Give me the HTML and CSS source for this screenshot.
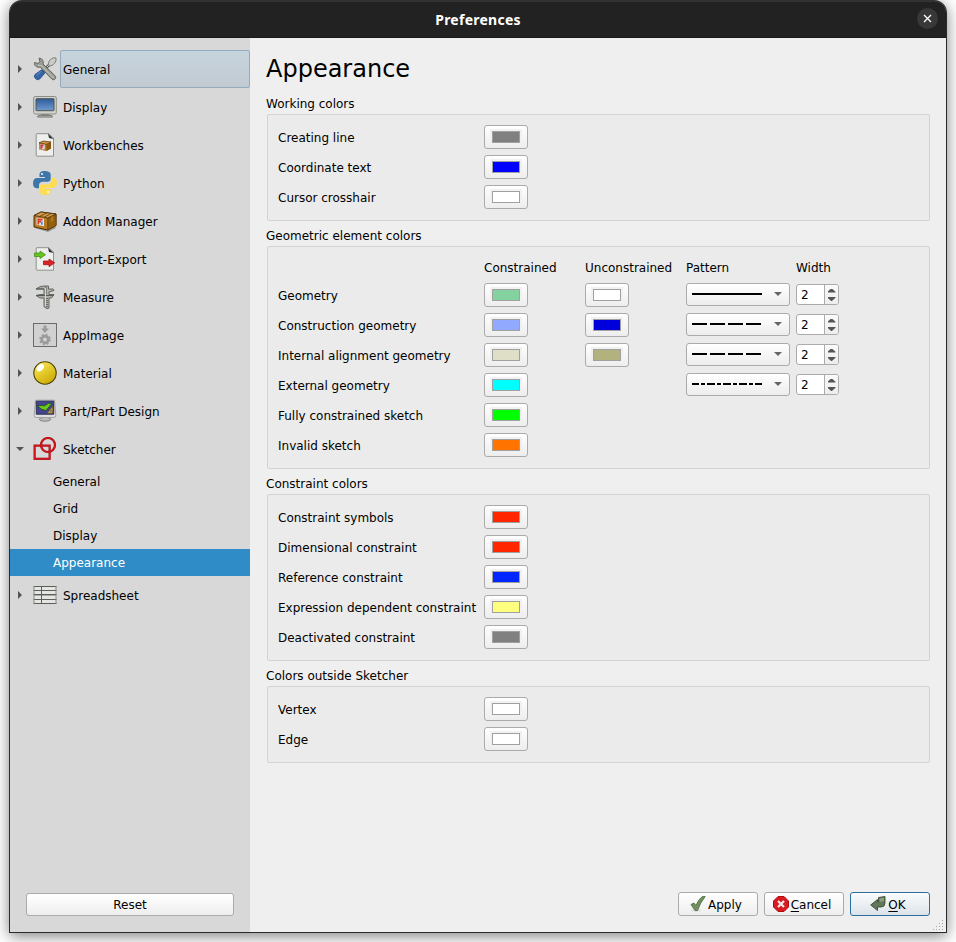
FILE: index.html
```html
<!DOCTYPE html>
<html lang="en">
<head>
<meta charset="utf-8">
<title>Preferences</title>
<link rel="stylesheet" href="styles.css">
</head>
<body>
<div class="window">
  <header class="titlebar">
    <span class="titlebar-text">Preferences</span>
    <button class="close" aria-label="Close"><svg width="21" height="21" viewBox="0 0 21 21"><path d="M7 7l7 7M14 7L7 14" stroke="#fff" stroke-width="1.300"/></svg></button>
  </header>
  <div class="body">
    <aside class="sidebar">
      <nav class="tree">
        <div class="item"><i class="arrow"></i>
          <svg class="icon" viewBox="0 0 24 24"><path d="M17.500 6.500l-8 8" stroke="#555753" stroke-width="2.500"/><path d="M17.500 6.500l-8 8" stroke="#d3d7cf" stroke-width="1"/><path d="M15.500 8c-.5-4 3-8 7.500-7 .7 4-2.500 7.500-6.300 8z" fill="#c9cdc6" stroke="#777b75"/><path d="M1.500 5.500l3.300 1L7 4.700l-1-3.500C9 1 11 4 10 7l12.300 12c1.500 2.200-1.100 4.800-3.300 3.300L7.300 10C4 11 .8 8.500 1.500 5.500z" fill="#9b9e96" stroke="#60645e"/><path d="M5 8.200q3 0 4 1.200L20.500 21" fill="none" stroke="#c9cbc4" stroke-width="1"/><path d="M8.700 12.800l3.200 3.200-5.200 6c-2.400 2.300-7-1.800-4.700-4.500z" fill="#3465a4" stroke="#204a87" stroke-width=".8"/><path d="M3.500 18.700l5-4.700" stroke="#729fcf" stroke-width=".8"/></svg>
          <span class="name focused">General</span></div>
        <div class="item"><i class="arrow"></i>
          <svg class="icon" viewBox="0 0 24 24"><defs><linearGradient id="screen" x2="0" y2="1"><stop stop-color="#2e5c99"/><stop offset="1" stop-color="#6f9bd0"/></linearGradient></defs><path d="M8 19h8v2H8z" fill="#888a85"/><path d="M5.500 20.300h13l1 1.700h-15z" fill="#c8cac5" stroke="#70726e"/><rect x=".7" y="1.500" width="22.600" height="17.500" rx="1.500" fill="#d0d4cc" stroke="#8b8e88"/><rect x="3" y="3.700" width="18" height="12" rx=".5" fill="url(#screen)" stroke="#50534e"/></svg>
          <span class="name">Display</span></div>
        <div class="item"><i class="arrow"></i>
          <svg class="icon" viewBox="0 0 24 24"><path d="M4 .7h12l4.500 4.500v18H4q-.8 0-.8-.8V1.500q0-.8.800-.8z" fill="#eeeeec" stroke="#8f918c"/><path d="M15 .5l6 6-1.500-.8-3.500-.7z" fill="#2b2b2b"/><path d="M6 9.800l4.500-1.800 7.500 1v6.500l-4.500 2.500L6 16.600z" fill="#b67725"/><path d="M13.500 11.500l4.500-2.500v6.500l-4.500 2.500z" fill="#8a570c"/><path d="M6 9.800l4.500-1.800 7.500 1-4.500 2.300z" fill="#cf9044" stroke="#533508" stroke-width=".6"/><path d="M6.800 11.500h5v4.800h-5z" fill="#cfd9e8"/><path d="M8 16v-3.700h2.500M8 14.200h2" stroke="#ce3020" stroke-width="1.300" fill="none"/></svg>
          <span class="name">Workbenches</span></div>
        <div class="item"><i class="arrow"></i>
          <svg class="icon" viewBox="0 0 24 24"><path d="M12 0C8 0 6.500 1.500 6.500 3.500V6H12v1H4C1.500 7 0 9 0 12.200 0 15.500 1.500 17.200 3.700 17.200H6v-3c0-2 1.700-3.400 3.700-3.400h5c1.700 0 3-1.300 3-3V3.500C17.700 1.200 15.500 0 12 0z" fill="#3d76a8"/><circle cx="9" cy="3" r="1.100" fill="#e8f0f6"/><path d="M12 24c4 0 5.700-1.500 5.700-3.500V18H12v-1h8c2.500 0 4-2 4-5.200 0-3.300-1.500-5-3.700-5H18.200V10c0 2-1.700 3.300-3.700 3.300h-5c-1.700 0-3 1.200-3 3v4.200C6.500 22.800 8.500 24 12 24z" fill="#ffdc55"/><circle cx="15" cy="21" r="1.100" fill="#fffbe8"/></svg>
          <span class="name">Python</span></div>
        <div class="item"><i class="arrow"></i>
          <svg class="icon" viewBox="0 0 24 24"><path d="M2 19l13 4 8-4-1-1.500z" fill="#9a9a9a"/><path d="M1 6.500L8 3l15 2v11.500L14.800 21 1 18z" fill="#b87a20" stroke="#4e3006"/><path d="M14.800 9L23 5v11.500L14.800 21z" fill="#94600e" stroke="#5c3b08" stroke-width=".8"/><path d="M1 6.500L8 3l15 2-8.200 4z" fill="#d29a4c" stroke="#4a2e06" stroke-width=".8"/><path d="M6.500 7.500L14 3.800M11 8.300l7.500-3.900" stroke="#5f3e0c" stroke-width=".8"/><path d="M18 8v5l2-1V7z" fill="#b07a24"/><path d="M3.500 8.500l7.500 1.300v7.400L3.500 15.800z" fill="#dde7f5"/><path d="M5.300 15.500V10.200l4.200.7M5.300 12.700h2.700" fill="none" stroke="#dc3a26" stroke-width="1.700"/><path d="M8.800 12.500v3.200" stroke="#4a86cc" stroke-width="1.700"/></svg>
          <span class="name">Addon Manager</span></div>
        <div class="item"><i class="arrow"></i>
          <svg class="icon" viewBox="0 0 24 24"><path d="M4 .7h12l4.500 4.500v18H4q-.8 0-.8-.8V1.500q0-.8.800-.8z" fill="#eeeeec" stroke="#8f918c"/><path d="M15 .5l6 6-1.500-.8-3.500-.7z" fill="#2b2b2b"/><path d="M1.500 6h5.500V4l5.500 3.700L7 11.500v-2H1.500z" fill="#66c41f" stroke="#478f14" stroke-width=".8"/><path d="M10.500 14h5.500v-2l5.700 3.800-5.700 3.900v-2h-5.500z" fill="#dc2525" stroke="#a01616" stroke-width=".8"/></svg>
          <span class="name">Import-Export</span></div>
        <div class="item"><i class="arrow"></i>
          <svg class="icon" viewBox="0 0 24 24"><path d="M3 4Q7 .8 11 1h4.500v3H20l1 1.500-5 1.500v2.500h5L18.500 13H16v10l-2 .7-3-2V13H7l-4-2.500 4-1h4V4z" fill="#adb1a9" stroke="#5a5d57" stroke-width=".9"/><path d="M3 4h8M13 1.500v8M3.500 10.500h17" fill="none" stroke="#4f524c" stroke-width=".9"/><path d="M12.500 3v18" stroke="#d4d7d0" stroke-width="1"/><path d="M14 13v9" stroke="#555" stroke-width="1.500" stroke-dasharray="1 1"/></svg>
          <span class="name">Measure</span></div>
        <div class="item"><i class="arrow"></i>
          <svg class="icon" viewBox="0 0 24 24"><rect x=".5" y=".5" width="23" height="23" fill="#d1d1d1" stroke="#6c6c6c"/><path d="M10.500 2.500h3v3H16l-4 4.500-4-4.500h2.500z" fill="#9b9b9b"/><circle cx="12" cy="16.500" r="3.300" fill="none" stroke="#9b9b9b" stroke-width="2.700"/><circle cx="12" cy="16.500" r="4.900" fill="none" stroke="#9b9b9b" stroke-width="1.800" stroke-dasharray="2 1.850"/></svg>
          <span class="name">AppImage</span></div>
        <div class="item"><i class="arrow"></i>
          <svg class="icon" viewBox="0 0 24 24"><defs><linearGradient id="gold" x1=".2" y1=".1" x2=".8" y2="1"><stop stop-color="#f7e44d"/><stop offset="1" stop-color="#c9a600"/></linearGradient></defs><circle cx="12" cy="12" r="11.200" fill="url(#gold)" stroke="#4b4205" stroke-width="1.100"/><ellipse cx="7.300" cy="6.700" rx="4.200" ry="3" transform="rotate(-45 7.300 6.700)" fill="#fff"/></svg>
          <span class="name">Material</span></div>
        <div class="item"><i class="arrow"></i>
          <svg class="icon" viewBox="0 0 24 24"><ellipse cx="12" cy="20.300" rx="5.700" ry="1.900" fill="#bbb" stroke="#858585"/><path d="M2.500 1.200h19l1.300 15.300q0 2-2 2H3.200q-2 0-2-2z" fill="#dedede" stroke="#a3a3a3"/><path d="M3.300 2.200h17.400v13H3.300z" fill="#44458c" stroke="#2d2d5c"/><path d="M4.500 7l4.500-.7 2 .7 5-3 2.500 1-5.500 6.500-4-1z" fill="#68ca21" stroke="#1d3f0a" stroke-width=".7"/><path d="M14 14.200l5.800-7v7z" fill="#cdb14f" stroke="#5c4708" stroke-width=".7"/><path d="M16.500 12.800l2-2.300v2.300z" fill="#44458c"/></svg>
          <span class="name">Part/Part Design</span></div>
        <div class="item"><i class="arrow open"></i>
          <svg class="icon" viewBox="0 0 24 24"><g fill="none" stroke="#a80f14" stroke-width="2.200"><rect x="1.600" y="8.600" width="15" height="13.200"/><circle cx="15" cy="8" r="7"/></g><g fill="none" stroke="#d4171c" stroke-width="1.200"><rect x="1.600" y="8.600" width="15" height="13.200"/><circle cx="15" cy="8" r="7"/></g></svg>
          <span class="name">Sketcher</span></div>
        <div class="child">General</div>
        <div class="child">Grid</div>
        <div class="child">Display</div>
        <div class="child selected">Appearance</div>
        <div class="item"><i class="arrow"></i>
          <svg class="icon" viewBox="0 0 24 24"><rect x="1" y="3" width="22" height="18" fill="#e4e6e1"/><path d="M1 12h22" stroke="#aaa" stroke-width="2"/><path d="M.5 3.500h23M.5 7.500h23M.5 11.500h23M.5 16.500h23M.5 20.500h23M8.500 3v18" stroke="#5c5e5b"/><path d="M1 3v18M23 3v18" stroke="#888"/></svg>
          <span class="name">Spreadsheet</span></div>
      </nav>
      <button class="button reset">Reset</button>
    </aside>
    <main class="page">
      <h1>Appearance</h1>
      <h2>Working colors</h2>
      <section class="group">
        <div class="row"><span>Creating line</span><button class="color"><i class="gray"></i></button></div>
        <div class="row"><span>Coordinate text</span><button class="color"><i class="blue"></i></button></div>
        <div class="row"><span>Cursor crosshair</span><button class="color"><i class="white"></i></button></div>
      </section>
      <h2>Geometric element colors</h2>
      <section class="group">
        <div class="row head"><span></span><span>Constrained</span><span>Unconstrained</span><span>Pattern</span><span>Width</span></div>
        <div class="row"><span>Geometry</span><button class="color"><i class="green"></i></button><button class="color"><i class="white"></i></button>
          <div class="combo"><svg width="72" height="2"><path d="M0 1h70"/></svg></div><div class="spin"><span>2</span><b></b></div></div>
        <div class="row"><span>Construction geometry</span><button class="color"><i class="periwinkle"></i></button><button class="color"><i class="navy"></i></button>
          <div class="combo"><svg width="72" height="2"><path class="dash" d="M0 1h69"/></svg></div><div class="spin"><span>2</span><b></b></div></div>
        <div class="row"><span>Internal alignment geometry</span><button class="color"><i class="cream"></i></button><button class="color"><i class="olive"></i></button>
          <div class="combo"><svg width="72" height="2"><path class="dash" d="M0 1h69"/></svg></div><div class="spin"><span>2</span><b></b></div></div>
        <div class="row"><span>External geometry</span><button class="color"><i class="cyan"></i></button><span></span>
          <div class="combo"><svg width="72" height="2"><path class="dashdot" d="M0 1h70"/></svg></div><div class="spin"><span>2</span><b></b></div></div>
        <div class="row"><span>Fully constrained sketch</span><button class="color"><i class="lime"></i></button></div>
        <div class="row"><span>Invalid sketch</span><button class="color"><i class="orange"></i></button></div>
      </section>
      <h2>Constraint colors</h2>
      <section class="group">
        <div class="row"><span>Constraint symbols</span><button class="color"><i class="red"></i></button></div>
        <div class="row"><span>Dimensional constraint</span><button class="color"><i class="red"></i></button></div>
        <div class="row"><span>Reference constraint</span><button class="color"><i class="royal"></i></button></div>
        <div class="row"><span>Expression dependent constraint</span><button class="color"><i class="yellow"></i></button></div>
        <div class="row"><span>Deactivated constraint</span><button class="color"><i class="gray"></i></button></div>
      </section>
      <h2>Colors outside Sketcher</h2>
      <section class="group">
        <div class="row"><span>Vertex</span><button class="color"><i class="white"></i></button></div>
        <div class="row"><span>Edge</span><button class="color"><i class="white"></i></button></div>
      </section>
      <footer class="actions">
        <button class="button"><svg width="16" height="16" viewBox="0 0 16 16"><ellipse cx="6" cy="14.500" rx="5" ry="1.200" fill="#ddd"/><path d="M1 8.500l3-1.500L6 9.500Q8 4 12 .7L15.200.5Q10 7 7.500 14.500H5z" fill="#73905f" stroke="#4c643e" stroke-width=".8"/></svg><span>Apply</span></button>
        <button class="button"><svg width="16" height="16" viewBox="0 0 16 16"><path d="M5 .5h6L15.500 5v6L11 15.500H5L.5 11V5z" fill="#d41b20" stroke="#b40c10"/><path d="M5 5l6 6M11 5l-6 6" stroke="#f3e6e6" stroke-width="2.300"/></svg><span><u>C</u>ancel</span></button>
        <button class="button default"><svg width="16" height="16" viewBox="0 0 16 16"><path d="M8.500 1.500l6.500-1V7q0 4-4 4H7.500v3.500L.7 9 7.500 3.500V6h1z" fill="#62775a" stroke="#3e4c34" stroke-width=".9"/><path d="M9.500 2.500l4.500-.8v3q-2 1.500-4.500 1z" fill="#8b9c80"/></svg><span><u>O</u>K</span></button>
      </footer>
      <svg class="grip" width="12" height="12" viewBox="0 0 12 12"><path d="M9 1.500h1M6 4.500h1M9 4.500h1M3 7.500h1M6 7.500h1M9 7.500h1M0 10.500h1M3 10.500h1M6 10.500h1M9 10.500h1" stroke="#aaa"/></svg>
    </main>
  </div>
</div>
</body>
</html>
```
FILE: styles.css
```css
* { box-sizing: border-box; }
body {
  margin: 0;
  height: 942px;
  overflow: hidden;
  background: #fff;
  color: #000;
  font: 12px/16px "DejaVu Sans", sans-serif;
}
button { font: inherit; color: inherit; padding: 0; margin: 0; }
.window {
  display: flex;
  flex-direction: column;
  width: 938px;
  height: 933px;
  margin-left: 9px;
  border: 1px solid #2a2a2a;
  border-top: 0;
  border-radius: 13px 13px 0 0;
  background: #efefef;
  box-shadow: 0 3px 15px rgba(0, 0, 0, .5);
}
.titlebar {
  position: relative;
  display: flex;
  flex: none;
  align-items: center;
  justify-content: center;
  height: 38px;
  border-radius: 12px 12px 0 0;
  background: #222;
  border-top: 2px solid #323232;
  border-bottom: 1px solid #181818;
}
.titlebar-text {
  color: #fff;
  font: bold 14px/20px "Noto Sans", sans-serif;
  letter-spacing: .25px;
}
.close {
  position: absolute;
  top: 6px;
  right: 8px;
  width: 21px;
  height: 21px;
  border: 0;
  border-radius: 50%;
  background: #383838;
}
.close svg { display: block; }
.body { display: flex; flex: 1; }
.sidebar {
  display: flex;
  flex-direction: column;
  justify-content: space-between;
  width: 240px;
  padding: 12px 0 16px;
  background: #d8d8d8;
}
.item { display: flex; align-items: center; height: 38px; }
.arrow {
  width: 4px;
  height: 8px;
  margin: 0 11px 0 8px;
  background: #555;
  clip-path: polygon(0 0, 100% 50%, 0 100%);
}
.arrow.open {
  width: 8px;
  height: 4px;
  margin: 0 9px 0 6px;
  clip-path: polygon(0 0, 100% 0, 50% 100%);
}
.icon { width: 24px; height: 24px; flex: none; }
.name {
  flex: 1;
  height: 38px;
  margin-left: 3px;
  padding-left: 2px;
  border: 1px solid transparent;
  line-height: 39px;
}
.focused {
  border-color: #92abbd;
  border-radius: 2px;
  background: linear-gradient(#c6d4dd, #c2cad1);
}
.child { height: 27px; padding-left: 43px; line-height: 29px; }
.selected { background: #308cc6; color: #fff; }
.button {
  display: flex;
  align-items: center;
  justify-content: center;
  gap: 2px;
  width: 80px;
  height: 24px;
  border: 1px solid #ababab;
  border-radius: 3px;
  background: linear-gradient(#fff, #eee);
}
.button svg { margin-left: -4px; }
.button span { padding-top: 2px; }
.button u { text-decoration-thickness: 1px; text-underline-offset: 2px; }
.reset { width: 208px; height: 23px; margin-left: 16px; }
.page {
  position: relative;
  display: flex;
  flex-direction: column;
  flex: 1;
  padding: 6px 16px 16px;
}
h1 { margin: 0; padding-top: 2px; font-size: 24px; line-height: 46px; font-weight: normal; }
h2 { margin: 0; padding-top: 2px; font-size: 12px; line-height: 20px; font-weight: normal; }
.group {
  margin: 0 0 3px 1px;
  padding: 7px 10px 8px;
  border: 1px solid #d3d3d3;
  border-radius: 2px;
  background: #ebebeb;
}
.row {
  display: grid;
  grid-template-columns: 206px 101px 101px 110px 43px;
  align-items: center;
  height: 30px;
  white-space: nowrap;
}
.row > span { padding-top: 2px; }
.head { height: 26px; }
.color {
  display: flex;
  align-items: center;
  justify-content: center;
  width: 44px;
  height: 24px;
  border: 1px solid #ababab;
  border-radius: 3px;
  background: linear-gradient(#fff, #ededed);
}
.color i {
  width: 28px;
  height: 12px;
  border: 1px solid #a0a0a0;
  box-shadow: 0 0 0 2px #f1f1f1;
}
.gray { background: #808080; }
.blue { background: #00f; }
.white { background: #fff; }
.green { background: #83d2a0; }
.periwinkle { background: #91aaff; }
.navy { background: #0000dc; }
.cream { background: #dfdfc8; }
.olive { background: #b2b27f; }
.cyan { background: #0ff; }
.lime { background: #0f0; }
.orange { background: #ff7300; }
.red { background: #ff2600; }
.royal { background: #0026ff; }
.yellow { background: #ffff7f; }
.combo {
  display: flex;
  align-items: center;
  justify-content: space-between;
  width: 104px;
  height: 23px;
  margin-bottom: 1px;
  padding: 0 7px 0 5px;
  border: 1px solid #ababab;
  border-radius: 3px;
  background: linear-gradient(#fff, #ededed);
}
.combo svg { margin-bottom: 1px; }
.combo::after {
  content: "";
  width: 8px;
  height: 4px;
  margin-bottom: 1px;
  background: #666;
  clip-path: polygon(0 0, 100% 0, 50% 100%);
}
.combo path { stroke: #000; stroke-width: 2px; }
.combo .dash { stroke-dasharray: 15px 3px; }
.combo .dashdot { stroke-dasharray: 8px 2px 4px 2px; stroke-dashoffset: 1px; }
.spin {
  display: flex;
  width: 43px;
  height: 21px;
  margin-bottom: 1px;
  border: 1px solid #ababab;
  border-radius: 3px;
  background: #fff;
}
.spin span { width: 27px; padding-left: 4px; line-height: 20px; }
.spin b {
  display: flex;
  flex: 1;
  flex-direction: column;
  align-items: center;
  justify-content: center;
  gap: 4px;
  border-left: 1px solid #ababab;
  border-radius: 0 2px 2px 0;
  background: linear-gradient(#fafafa, #ededed);
}
.spin b::before, .spin b::after {
  content: "";
  width: 8px;
  height: 4px;
  background: #555;
  clip-path: polygon(0 100%, 0 80%, 45% 0, 55% 0, 100% 80%, 100% 100%);
}
.spin b::after { transform: scaleY(-1); }
.actions {
  display: flex;
  justify-content: flex-end;
  gap: 6px;
  margin-top: auto;
}
.default { border-color: #2a6f9c; background: linear-gradient(#fafcfd, #dbe3e9); }
.grip { position: absolute; right: 1px; bottom: 1px; }
```
